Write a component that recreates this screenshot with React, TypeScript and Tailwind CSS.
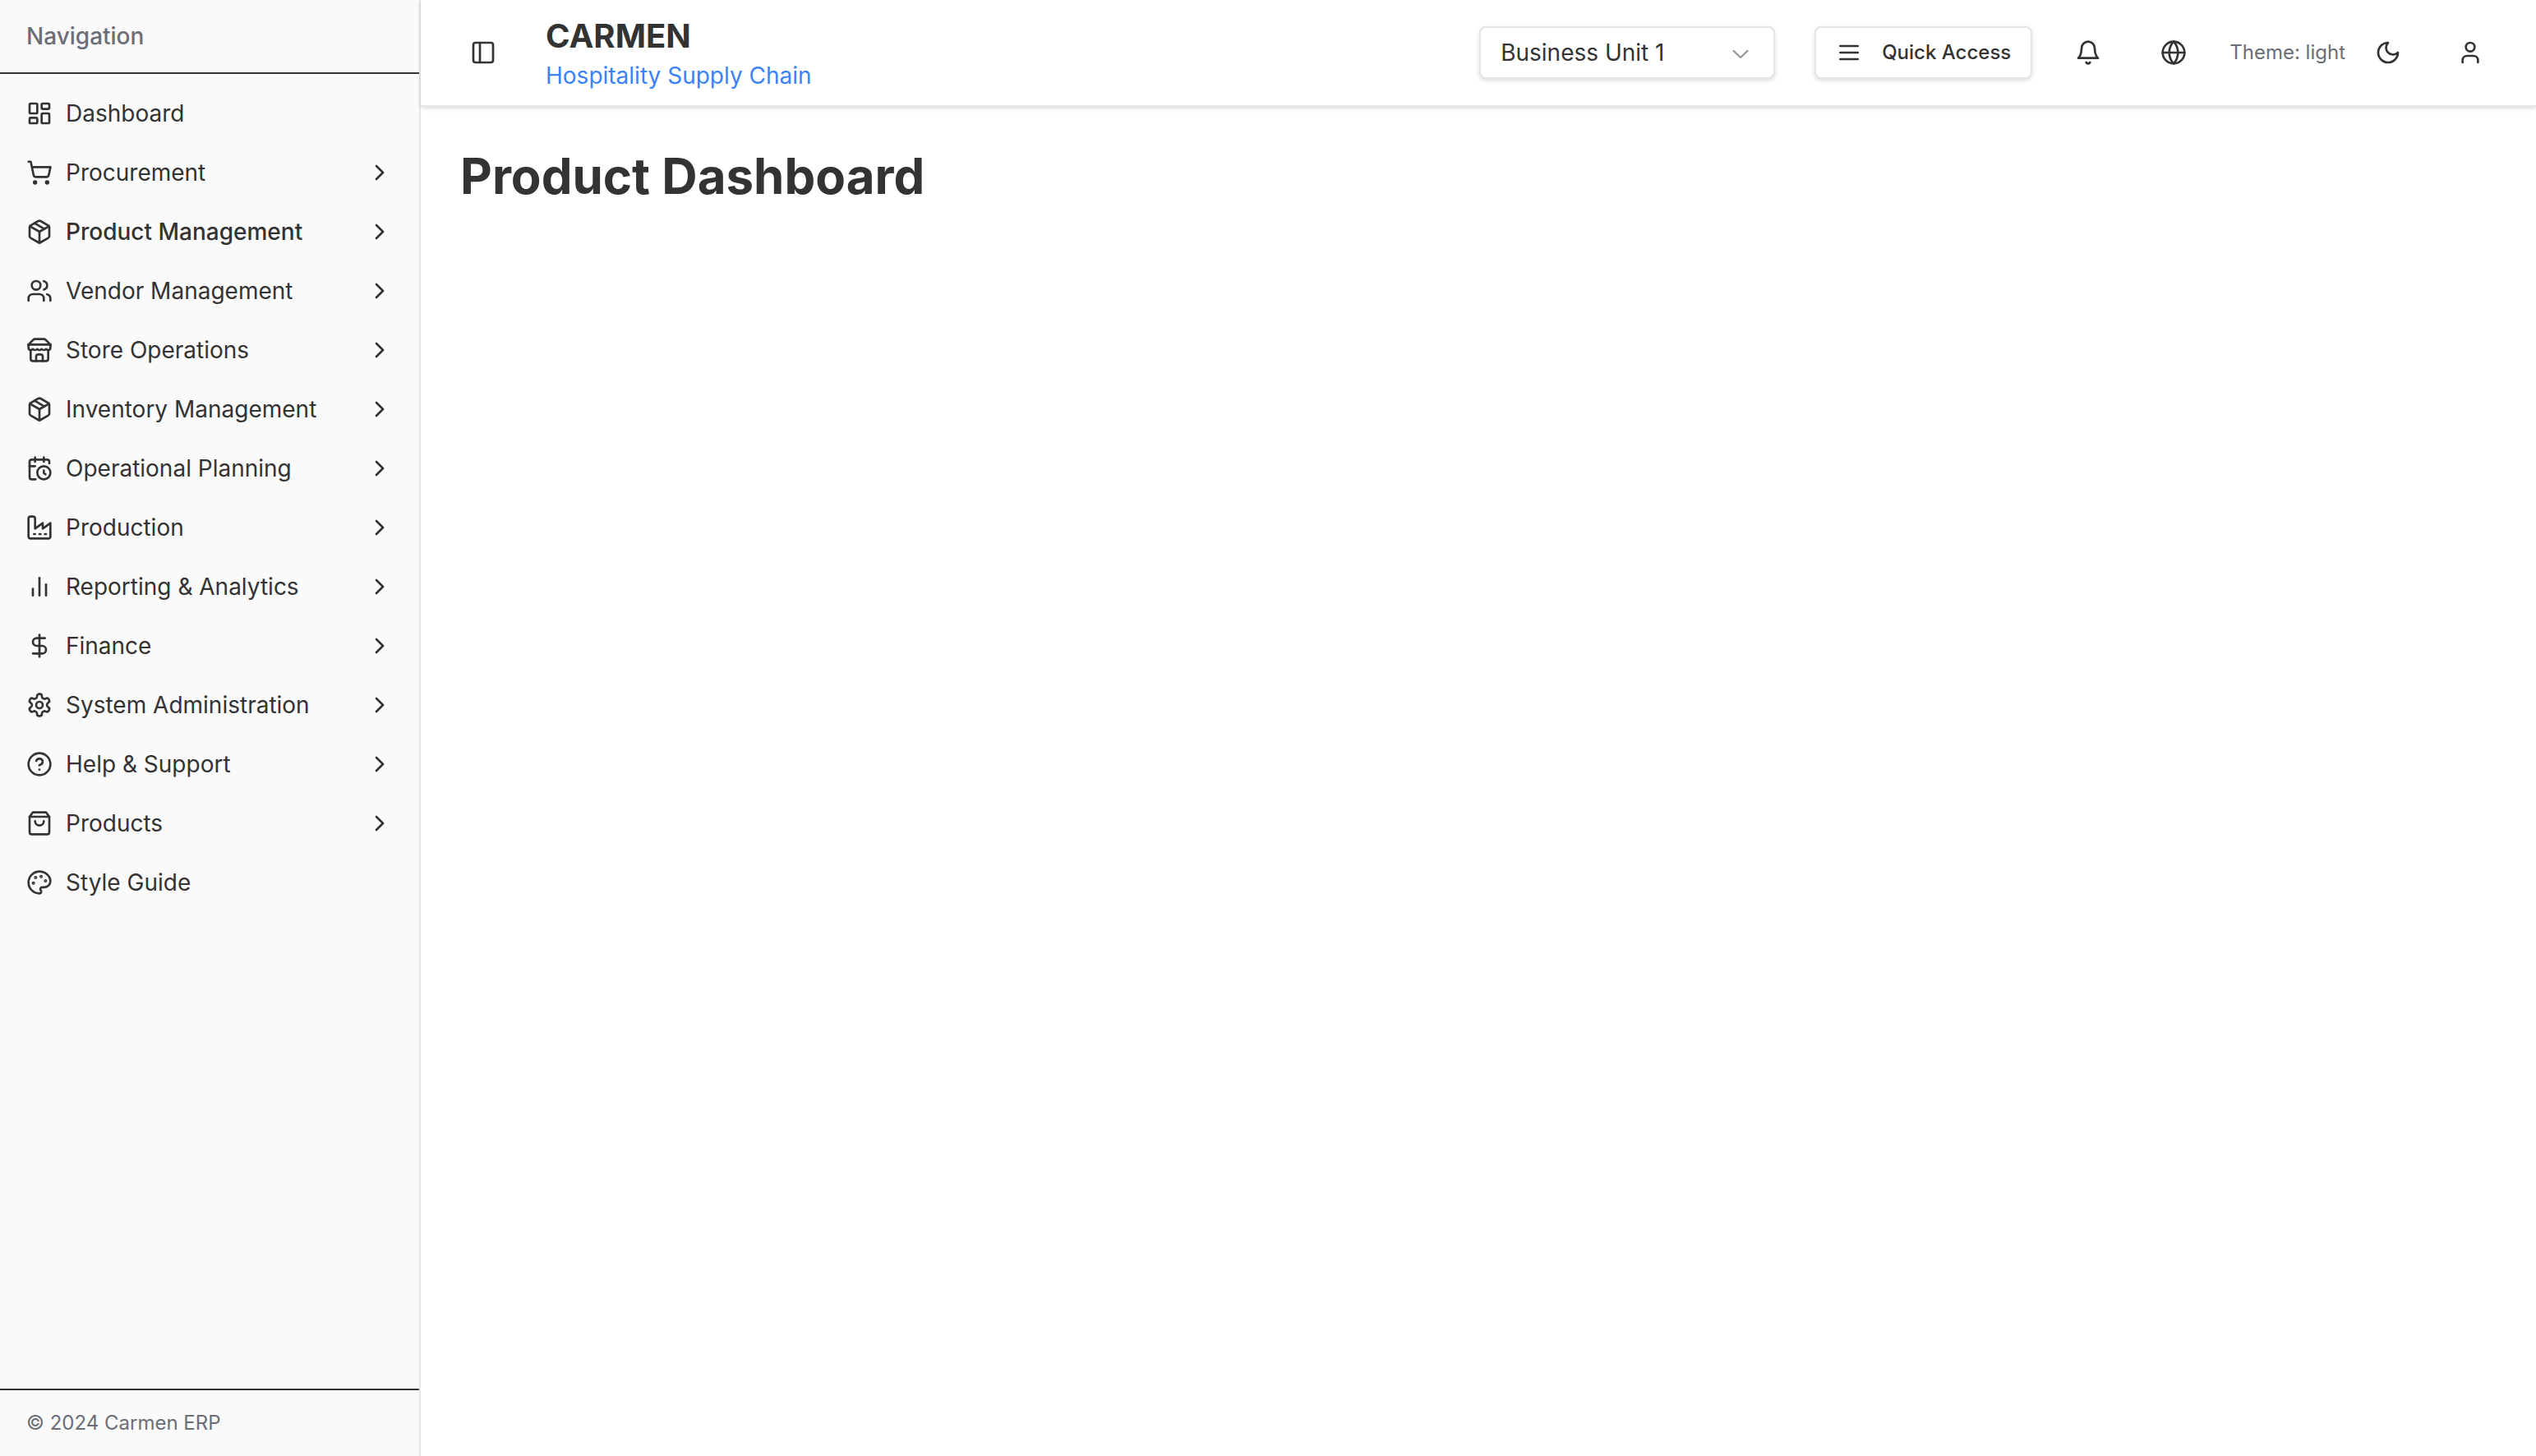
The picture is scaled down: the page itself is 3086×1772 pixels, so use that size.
import React from "react";
import { LayoutDashboard, Users, DollarSign, CircleHelp, ChevronRight, PanelLeft, Globe, User } from "lucide-react";

type IconProps = { className?: string };

function Glyph({ className, children }: IconProps & { children: React.ReactNode }) {
  return (
    <svg
      className={className}
      viewBox="0 0 24 24"
      fill="none"
      stroke="currentColor"
      strokeWidth="2"
      strokeLinecap="round"
      strokeLinejoin="round"
      aria-hidden="true"
    >
      {children}
    </svg>
  );
}

const Cart = ({ className }: IconProps) => (
  <Glyph className={className}>
    <circle cx="8" cy="21" r="1" />
    <circle cx="19" cy="21" r="1" />
    <path d="M2.05 2.05h2l2.66 12.42a2 2 0 0 0 2 1.58h9.78a2 2 0 0 0 1.95-1.57l1.65-7.43H5.12" />
  </Glyph>
);

const Box = ({ className }: IconProps) => (
  <Glyph className={className}>
    <path d="m7.5 4.27 9 5.15" />
    <path d="M21 8a2 2 0 0 0-1-1.73l-7-4a2 2 0 0 0-2 0l-7 4A2 2 0 0 0 3 8v8a2 2 0 0 0 1 1.73l7 4a2 2 0 0 0 2 0l7-4A2 2 0 0 0 21 16Z" />
    <path d="m3.3 7 8.7 5 8.7-5" />
    <path d="M12 22V12" />
  </Glyph>
);

const Store = ({ className }: IconProps) => (
  <Glyph className={className}>
    <path d="m2 7 4.41-4.41A2 2 0 0 1 7.83 2h8.34a2 2 0 0 1 1.42.59L22 7" />
    <path d="M4 12v8a2 2 0 0 0 2 2h12a2 2 0 0 0 2-2v-8" />
    <path d="M15 22v-4a2 2 0 0 0-2-2h-2a2 2 0 0 0-2 2v4" />
    <path d="M2 7h20" />
    <path d="M22 7v3a2 2 0 0 1-2 2a2.7 2.7 0 0 1-1.59-.63.7.7 0 0 0-.82 0A2.7 2.7 0 0 1 16 12a2.7 2.7 0 0 1-1.59-.63.7.7 0 0 0-.82 0A2.7 2.7 0 0 1 12 12a2.7 2.7 0 0 1-1.59-.63.7.7 0 0 0-.82 0A2.7 2.7 0 0 1 8 12a2.7 2.7 0 0 1-1.59-.63.7.7 0 0 0-.82 0A2.7 2.7 0 0 1 4 12a2 2 0 0 1-2-2V7" />
  </Glyph>
);

const CalendarClock = ({ className }: IconProps) => (
  <Glyph className={className}>
    <path d="M21 7.5V6a2 2 0 0 0-2-2H5a2 2 0 0 0-2 2v14a2 2 0 0 0 2 2h3.5" />
    <path d="M16 2v4" />
    <path d="M8 2v4" />
    <path d="M3 10h5" />
    <path d="M17.5 17.5 16 16.3V14" />
    <circle cx="16" cy="16" r="6" />
  </Glyph>
);

const Factory = ({ className }: IconProps) => (
  <Glyph className={className}>
    <path d="M2 20a2 2 0 0 0 2 2h16a2 2 0 0 0 2-2V8l-7 5V8l-7 5V4a2 2 0 0 0-2-2H4a2 2 0 0 0-2 2Z" />
    <path d="M17 18h1" />
    <path d="M12 18h1" />
    <path d="M7 18h1" />
  </Glyph>
);

const Bars = ({ className }: IconProps) => (
  <Glyph className={className}>
    <path d="M18 20V10" />
    <path d="M12 20V4" />
    <path d="M6 20v-6" />
  </Glyph>
);

const Gear = ({ className }: IconProps) => (
  <Glyph className={className}>
    <path d="M12.22 2h-.44a2 2 0 0 0-2 2v.18a2 2 0 0 1-1 1.73l-.43.25a2 2 0 0 1-2 0l-.15-.08a2 2 0 0 0-2.73.73l-.22.38a2 2 0 0 0 .73 2.73l.15.1a2 2 0 0 1 1 1.72v.51a2 2 0 0 1-1 1.74l-.15.09a2 2 0 0 0-.73 2.73l.22.38a2 2 0 0 0 2.73.73l.15-.08a2 2 0 0 1 2 0l.43.25a2 2 0 0 1 1 1.73V20a2 2 0 0 0 2 2h.44a2 2 0 0 0 2-2v-.18a2 2 0 0 1 1-1.73l.43-.25a2 2 0 0 1 2 0l.15.08a2 2 0 0 0 2.73-.73l.22-.39a2 2 0 0 0-.73-2.73l-.15-.08a2 2 0 0 1-1-1.74v-.5a2 2 0 0 1 1-1.74l.15-.09a2 2 0 0 0 .73-2.73l-.22-.38a2 2 0 0 0-2.73-.73l-.15.08a2 2 0 0 1-2 0l-.43-.25a2 2 0 0 1-1-1.73V4a2 2 0 0 0-2-2z" />
    <circle cx="12" cy="12" r="3" />
  </Glyph>
);

const Bag = ({ className }: IconProps) => (
  <Glyph className={className}>
    <path d="M6 2 3 6v14a2 2 0 0 0 2 2h14a2 2 0 0 0 2-2V6l-3-4Z" />
    <path d="M3 6h18" />
    <path d="M16 10a4 4 0 0 1-8 0" />
  </Glyph>
);

const Palette = ({ className }: IconProps) => (
  <Glyph className={className}>
    <circle cx="13.5" cy="6.5" r=".5" fill="currentColor" />
    <circle cx="17.5" cy="10.5" r=".5" fill="currentColor" />
    <circle cx="8.5" cy="7.5" r=".5" fill="currentColor" />
    <circle cx="6.5" cy="12.5" r=".5" fill="currentColor" />
    <path d="M12 2C6.5 2 2 6.5 2 12s4.5 10 10 10c.926 0 1.648-.746 1.648-1.688 0-.437-.18-.835-.437-1.125-.29-.289-.438-.652-.438-1.125a1.64 1.64 0 0 1 1.668-1.668h1.996c3.051 0 5.555-2.503 5.555-5.554C21.965 6.012 17.461 2 12 2z" />
  </Glyph>
);

const Menu = ({ className }: IconProps) => (
  <Glyph className={className}>
    <path d="M4 6h16" />
    <path d="M4 12h16" />
    <path d="M4 18h16" />
  </Glyph>
);

const Bell = ({ className }: IconProps) => (
  <Glyph className={className}>
    <path d="M6 8a6 6 0 0 1 12 0c0 7 3 9 3 9H3s3-2 3-9" />
    <path d="M10.3 21a1.94 1.94 0 0 0 3.4 0" />
  </Glyph>
);

const Moon = ({ className }: IconProps) => (
  <Glyph className={className}>
    <path d="M12 3a6 6 0 0 0 9 9 9 9 0 1 1-9-9Z" />
  </Glyph>
);

const ThinChevronDown = ({ className }: IconProps) => (
  <svg className={className} viewBox="0 0 15 15" fill="currentColor" aria-hidden="true">
    <path d="M3.13523 6.15803C3.3241 5.95657 3.64052 5.94637 3.84197 6.13523L7.5 9.56464L11.158 6.13523C11.3595 5.94637 11.6759 5.95657 11.8648 6.15803C12.0536 6.35949 12.0434 6.67591 11.842 6.86477L7.84197 10.6148C7.64964 10.7951 7.35036 10.7951 7.15803 10.6148L3.15803 6.86477C2.95657 6.67591 2.94637 6.35949 3.13523 6.15803Z" />
  </svg>
);

type Item = {
  label: string;
  icon: React.ComponentType<IconProps>;
  sub?: boolean;
  active?: boolean;
};

const items: Item[] = [
  { label: "Dashboard", icon: LayoutDashboard },
  { label: "Procurement", icon: Cart, sub: true },
  { label: "Product Management", icon: Box, sub: true, active: true },
  { label: "Vendor Management", icon: Users, sub: true },
  { label: "Store Operations", icon: Store, sub: true },
  { label: "Inventory Management", icon: Box, sub: true },
  { label: "Operational Planning", icon: CalendarClock, sub: true },
  { label: "Production", icon: Factory, sub: true },
  { label: "Reporting & Analytics", icon: Bars, sub: true },
  { label: "Finance", icon: DollarSign, sub: true },
  { label: "System Administration", icon: Gear, sub: true },
  { label: "Help & Support", icon: CircleHelp, sub: true },
  { label: "Products", icon: Bag, sub: true },
  { label: "Style Guide", icon: Palette },
];

function NavItem({ label, icon: Icon, sub, active }: Item) {
  const row = "flex h-18 items-center gap-4 px-4 text-left text-[28px] leading-10";
  if (!sub) {
    return (
      <a href="#" className={row}>
        <Icon className="size-8 shrink-0" />
        <span>{label}</span>
      </a>
    );
  }
  return (
    <button type="button" className={`${row} ${active ? "font-medium" : ""}`}>
      <Icon className="size-8 shrink-0" />
      <span className="flex-1">{label}</span>
      <ChevronRight className="size-8 shrink-0" />
    </button>
  );
}

function IconButton({ label, children }: { label: string; children: React.ReactNode }) {
  return (
    <button type="button" aria-label={label} className="flex size-18 shrink-0 items-center justify-center">
      {children}
    </button>
  );
}

export default function App() {
  return (
    <div className="flex min-h-screen bg-white font-[Inter,sans-serif] text-[#333333]">
      <aside className="flex w-[512px] shrink-0 flex-col border-r-2 border-[#e5e5e5] bg-[#fafafa]">
        <div className="border-b-2 border-[#333333] px-8 py-6">
          <h2 className="text-[28px] leading-10 font-medium text-[#6b6e76]">Navigation</h2>
        </div>
        <nav className="flex flex-1 flex-col px-4 pt-3 pb-4">
          {items.map((item) => (
            <NavItem key={item.label} {...item} />
          ))}
        </nav>
        <footer className="border-t-2 border-[#333333] px-8 py-6 text-2xl leading-8 text-[#6b6e76]">
          © 2024 Carmen ERP
        </footer>
      </aside>
      <div className="flex min-w-0 flex-1 flex-col">
        <header className="flex items-center border-b-2 border-[#e5e7eb] py-4 pr-11 pl-10 shadow-[0_2px_6px_rgba(0,0,0,0.1),0_2px_4px_-2px_rgba(0,0,0,0.1)]">
          <IconButton label="Toggle sidebar">
            <PanelLeft className="size-8" />
          </IconButton>
          <a href="#" className="ml-10 flex flex-col">
            <span className="text-[40px] leading-14 font-bold">CARMEN</span>
            <span className="text-[28px] leading-10 text-[#3b82f6]">Hospitality Supply Chain</span>
          </a>
          <div className="ml-auto flex items-center gap-8">
            <div className="mr-4 grid w-[360px] items-center">
              <select
                aria-label="Business unit"
                defaultValue="Business Unit 1"
                className="col-start-1 row-start-1 h-16 w-full appearance-none rounded-lg border-2 border-[#e5e5e5] bg-white px-6 text-[28px] leading-10 shadow-[0_2px_6px_rgba(0,0,0,0.1),0_2px_4px_-2px_rgba(0,0,0,0.1)]"
              >
                <option>Business Unit 1</option>
              </select>
              <ThinChevronDown className="pointer-events-none col-start-1 row-start-1 mr-6.5 size-8 justify-self-end opacity-50" />
            </div>
            <button
              type="button"
              className="flex h-16 items-center gap-6 rounded-lg border-2 border-[#e5e5e5] bg-white px-6 text-2xl leading-8 font-medium shadow-[0_2px_6px_rgba(0,0,0,0.1),0_2px_4px_-2px_rgba(0,0,0,0.1)]"
            >
              <Menu className="size-8" />
              Quick Access
            </button>
            <IconButton label="Notifications">
              <Bell className="size-8" />
            </IconButton>
            <IconButton label="Language">
              <Globe className="size-8" />
            </IconButton>
            <div className="flex items-center gap-4">
              <span className="text-2xl leading-8 text-[#6b6e76]">Theme: light</span>
              <IconButton label="Toggle theme">
                <Moon className="size-8" />
              </IconButton>
            </div>
            <div className="-ml-1 flex">
              <IconButton label="Account">
                <User className="size-8" />
              </IconButton>
            </div>
          </div>
        </header>
        <main className="p-12">
          <h1 className="text-[60px] leading-[72px] font-bold">Product Dashboard</h1>
        </main>
      </div>
    </div>
  );
}
